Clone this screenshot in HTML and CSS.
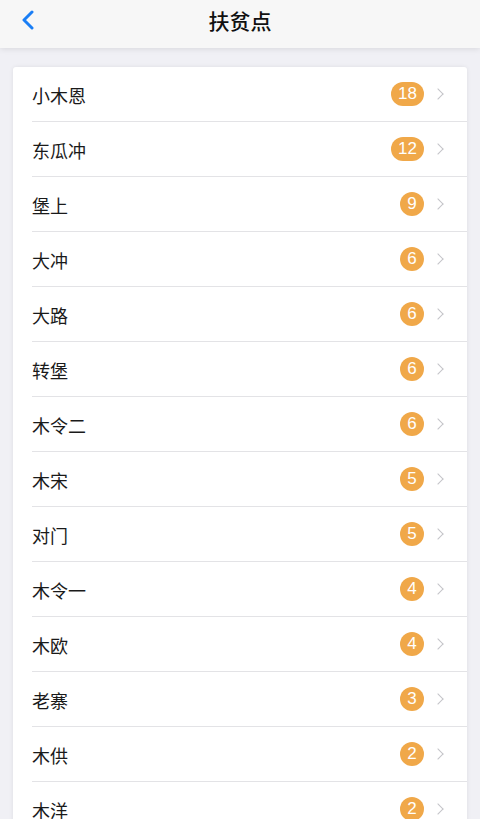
FILE: index.html
```html
<!DOCTYPE html>
<html lang="zh">
<head>
  <meta charset="UTF-8">
  <meta name="viewport" content="width=device-width, initial-scale=1.0">
  <title>扶贫点</title>
  <link rel="stylesheet" href="styles.css">
</head>
<body>
  <div id="navbar">
    <span class="back">
      <svg width="14" height="20" viewBox="0 0 14 20"><path d="M11 2 L3 10 L11 18" fill="none" stroke="#1a7ef5" stroke-width="3" stroke-linecap="round" stroke-linejoin="round"/></svg>
    </span>
    <span class="title">扶贫点</span>
  </div>
  <ul id="list">
    <li class="row"><span class="name">小木恩</span><span class="badge">18</span><span class="chev"></span></li>
    <li class="row"><span class="name">东瓜冲</span><span class="badge">12</span><span class="chev"></span></li>
    <li class="row"><span class="name">堡上</span><span class="badge">9</span><span class="chev"></span></li>
    <li class="row"><span class="name">大冲</span><span class="badge">6</span><span class="chev"></span></li>
    <li class="row"><span class="name">大路</span><span class="badge">6</span><span class="chev"></span></li>
    <li class="row"><span class="name">转堡</span><span class="badge">6</span><span class="chev"></span></li>
    <li class="row"><span class="name">木令二</span><span class="badge">6</span><span class="chev"></span></li>
    <li class="row"><span class="name">木宋</span><span class="badge">5</span><span class="chev"></span></li>
    <li class="row"><span class="name">对门</span><span class="badge">5</span><span class="chev"></span></li>
    <li class="row"><span class="name">木令一</span><span class="badge">4</span><span class="chev"></span></li>
    <li class="row"><span class="name">木欧</span><span class="badge">4</span><span class="chev"></span></li>
    <li class="row"><span class="name">老寨</span><span class="badge">3</span><span class="chev"></span></li>
    <li class="row"><span class="name">木供</span><span class="badge">2</span><span class="chev"></span></li>
    <li class="row"><span class="name">木洋</span><span class="badge">2</span><span class="chev"></span></li>
  </ul>
</body>
</html>
```

FILE: styles.css
```css
body {
  margin: 0;
  overflow: hidden;
  background: #f0f0f5;
  width: 100vw;
  height: 100vh;
  font-family: "Noto Sans CJK SC", "Noto Sans", sans-serif;
}
#navbar {
  position: relative;
  height: 48px;
  background: #f7f7f7;
  box-shadow: 0 1px 6px rgba(0, 0, 0, 0.1);
  display: flex;
  align-items: center;
  justify-content: center;
}
.back {
  position: absolute;
  left: 21px;
  top: 10px;
  display: flex;
}
.title {
  font-size: 21px;
  font-weight: 500;
  color: #111;
  margin-top: -8px;
}
#list {
  list-style: none;
  margin: 19px 13px 0;
  padding: 0;
  background: white;
  border-radius: 3px;
  box-shadow: 0 0 4px rgba(0, 0, 0, 0.08);
}
.row {
  height: 54px;
  margin-left: 19px;
  border-bottom: 1px solid #e3e3e6;
  display: flex;
  align-items: center;
}
.name {
  flex: 1;
  font-size: 18px;
  color: #1a1a1a;
  padding-top: 1px;
}
.badge {
  min-width: 24px;
  height: 24px;
  padding: 0 7px;
  box-sizing: border-box;
  border-radius: 12px;
  background: #f0a849;
  color: white;
  font-family: "Liberation Sans", Arial, sans-serif;
  font-size: 17px;
  line-height: 24px;
  text-align: center;
}
.chev {
  width: 7px;
  height: 7px;
  border-top: 1.5px solid #c4c4c8;
  border-right: 1.5px solid #c4c4c8;
  transform: rotate(45deg);
  margin: 0 25px 0 10px;
}
```
